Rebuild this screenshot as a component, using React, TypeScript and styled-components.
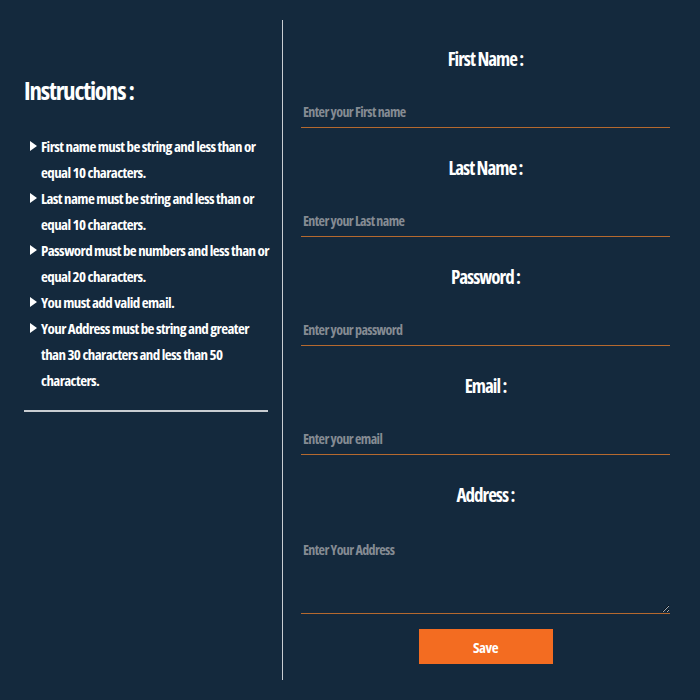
import styled, { createGlobalStyle } from "styled-components";

const GlobalStyle = createGlobalStyle`
  html, body {
    margin: 0;
    padding: 0;
    background: #14293d;
  }
  body {
    font-family: "Open Sans", "DejaVu Sans Condensed", sans-serif;
    font-stretch: 75%;
    font-weight: bold;
  }
`;

const Page = styled.div`
  display: flex;
  width: 700px;
  height: 700px;
  background: #14293d;
  color: #fff;
  box-sizing: border-box;
  padding: 20px 0;
`;

const Aside = styled.aside`
  width: 282px;
  box-sizing: border-box;
  padding: 55px 14px 0 24px;
`;

const Heading = styled.h2`
  margin: 0 0 28px;
  font-size: 25px;
  line-height: 30px;
  letter-spacing: -1.2px;
  font-weight: bold;
`;

const RuleList = styled.ul`
  list-style: none;
  margin: 0;
  padding: 0 0 0 6px;
`;

const RuleItem = styled.li`
  position: relative;
  padding-left: 11px;
  font-size: 15px;
  line-height: 26px;
  letter-spacing: -0.6px;
  white-space: nowrap;

  &::before {
    content: "";
    position: absolute;
    left: 0;
    top: 8px;
    border-left: 7px solid #fff;
    border-top: 5px solid transparent;
    border-bottom: 5px solid transparent;
  }
`;

const Divider = styled.hr`
  margin: 17px 0 0;
  border: none;
  border-top: 2px solid #c9cdd2;
  width: 244px;
`;

const FormPanel = styled.form`
  flex: 1;
  border-left: 1px solid #c9cdd2;
  padding: 27px 30px 0 18px;
  display: flex;
  flex-direction: column;
`;

const Field = styled.div`
  display: flex;
  flex-direction: column;
  align-items: center;
  margin-bottom: 28px;
`;

const Label = styled.label`
  font-size: 19px;
  line-height: 24px;
  letter-spacing: -1px;
  margin-bottom: 25px;
`;

const TextInput = styled.input`
  width: 100%;
  box-sizing: border-box;
  height: 32px;
  background: transparent;
  border: none;
  border-bottom: 1px solid #b5692f;
  color: #fff;
  font-family: inherit;
  font-stretch: inherit;
  font-weight: bold;
  font-size: 14px;
  letter-spacing: -0.6px;
  padding: 0 2px;
  outline: none;

  &::placeholder {
    color: #858b93;
  }
`;

const TextArea = styled.textarea`
  width: 100%;
  box-sizing: border-box;
  height: 82px;
  background: transparent;
  border: none;
  border-bottom: 1px solid #b5692f;
  color: #fff;
  font-family: inherit;
  font-stretch: inherit;
  font-weight: bold;
  font-size: 14px;
  letter-spacing: -0.6px;
  padding: 8px 2px;
  outline: none;
  resize: vertical;

  &::placeholder {
    color: #858b93;
  }
`;

const SaveButton = styled.button`
  align-self: center;
  width: 134px;
  height: 35px;
  margin-top: -13px;
  background: #f36c21;
  color: #fff;
  border: none;
  font-family: inherit;
  font-stretch: inherit;
  font-weight: bold;
  font-size: 15px;
  letter-spacing: -0.5px;
  cursor: pointer;
`;

const rules = [
  ["First name must be string and less than or", "equal 10 characters."],
  ["Last name must be string and less than or", "equal 10 characters."],
  ["Password must be numbers and less than or", "equal 20 characters."],
  ["You must add valid email."],
  ["Your Address must be string and greater", "than 30 characters and less than 50", "characters."],
];

const fields = [
  { label: "First Name :", placeholder: "Enter your First name", type: "text" },
  { label: "Last Name :", placeholder: "Enter your Last name", type: "text" },
  { label: "Password :", placeholder: "Enter your password", type: "password" },
  { label: "Email :", placeholder: "Enter your email", type: "email" },
];

export default function App() {
  return (
    <>
      <GlobalStyle />
      <Page>
        <Aside>
          <Heading>Instructions :</Heading>
          <RuleList>
            {rules.map((lines) => (
              <RuleItem key={lines[0]}>
                {lines.map((l, i) => (
                  <span key={l}>
                    {i > 0 && <br />}
                    {l}
                  </span>
                ))}
              </RuleItem>
            ))}
          </RuleList>
          <Divider />
        </Aside>
        <FormPanel onSubmit={(e) => e.preventDefault()}>
          {fields.map((f) => (
            <Field key={f.label}>
              <Label>{f.label}</Label>
              <TextInput type={f.type} placeholder={f.placeholder} />
            </Field>
          ))}
          <Field>
            <Label>Address :</Label>
            <TextArea placeholder="Enter Your Address" />
          </Field>
          <SaveButton type="submit">Save</SaveButton>
        </FormPanel>
      </Page>
    </>
  );
}
